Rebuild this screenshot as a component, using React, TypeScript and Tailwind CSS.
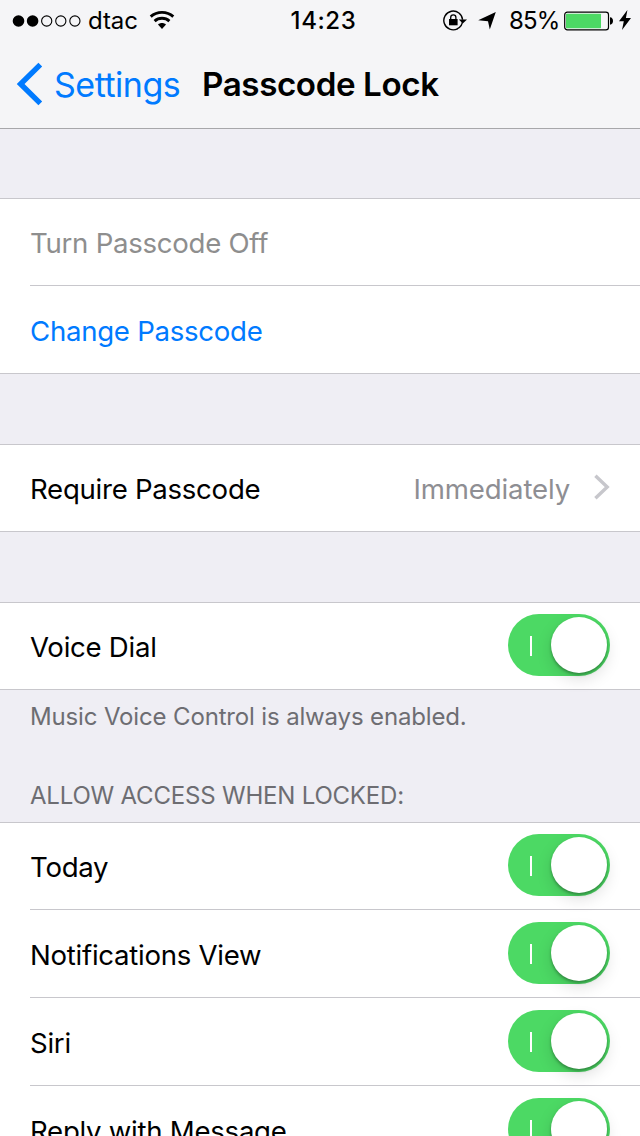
import React, { useState } from 'react';
import clsx from 'clsx';

const signal = [true, true, false, false, false];

const accessOptions = ['Today', 'Notifications View', 'Siri', 'Reply with Message'];

const StatusBar: React.FC = () => (
  <div className="relative flex h-10 items-center pl-3 text-2xl leading-10 text-black">
    <svg width="70" height="14" viewBox="0 0 70 14" className="mt-[1px] shrink-0">
      {signal.map((on, i) => (
        <circle
          key={i}
          cx={6.5 + i * 14.1}
          cy="7"
          r={on ? 5.8 : 5.1}
          fill={on ? '#000' : 'none'}
          stroke={on ? 'none' : '#000'}
          strokeWidth="1.1"
        />
      ))}
    </svg>
    <span className="ml-[6px] mt-[2px] w-[62px] tracking-[-0.1px]">dtac</span>
    <svg width="26" height="20" viewBox="0 0 26 20" fill="none" stroke="#000" strokeWidth="2.9" className="-ml-px shrink-0">
      <path d="M1.7 6.6C8 .9 18 .9 24.3 6.6" />
      <path d="M5.6 11.1C9.7 7.3 16.3 7.3 20.4 11.1" />
      <path d="M9 14.6C11.2 12.6 14.8 12.6 17 14.6L13 19Z" fill="#000" stroke="none" />
    </svg>

    <div className="absolute left-0 top-px w-full pl-[7px] text-center font-medium tracking-[0.6px]">14:23</div>

    <div className="ml-auto flex items-center pr-[9px]">
      <svg width="24" height="21" viewBox="0 0 24 21" className="mr-[11px]">
        <path d="M14.5 18.8A9.4 9.4 0 1 1 19.6 9.8" fill="none" stroke="#000" strokeWidth="1.4" />
        <path d="M15.8 9.5H24L19.8 13.6Z" />
        <path d="M19.6 10.5A9.4 9.4 0 0 1 14 18.9" fill="none" stroke="#000" strokeWidth="1.4" />
        <rect x="6" y="9" width="8.6" height="6.3" />
        <path d="M7.7 9.5V7.5A2.6 2.6 0 0 1 12.9 7.5V9.5" fill="none" stroke="#000" strokeWidth="1.3" />
      </svg>
      <svg width="19" height="18" viewBox="0 0 19 18" className="mr-3 mt-[1px]">
        <path d="M17.8 0L11.8 17.6L10 9.2L.2 8.3Z" />
      </svg>
      <span className="mt-[2px] w-[55px] tracking-[-0.9px]">85%</span>
      <svg width="50" height="20" viewBox="0 0 50 20" className="mt-[1px]">
        <rect x=".7" y="1.2" width="43.8" height="17.6" rx="2.6" fill="none" stroke="#000" strokeWidth="1.2" />
        <rect x="2" y="2.7" width="35" height="14.6" rx=".8" fill="#4cd964" />
        <path d="M46 6.3C50 6.3 50 13.7 46 13.7Z" />
      </svg>
      <svg width="12" height="20" viewBox="0 0 12 20" className="ml-[5px]">
        <path d="M8.4 0L0 11.2H4.8L3 20L12 8H6.9Z" />
      </svg>
    </div>
  </div>
);

const NavBar: React.FC = () => (
  <div className="flex h-[88px] items-center pl-4 text-[34px] leading-[40px]">
    <svg width="28" height="44" viewBox="0 0 28 44" fill="none" stroke="#007aff" strokeWidth="5.4">
      <path d="M24.3 2.6L4.6 22L24.3 41.4" />
    </svg>
    <span className="ml-[10px] mt-px w-[148px] shrink-0 whitespace-nowrap tracking-[-0.5px] text-[#007aff]">Settings</span>
    <h1 className="whitespace-nowrap text-[33.2px] font-semibold tracking-[-0.42px] text-black">Passcode Lock</h1>
  </div>
);

const Switch: React.FC = () => {
  const [on, setOn] = useState(true);

  return (
    <button
      role="switch"
      aria-checked={on}
      onClick={() => setOn(!on)}
      className={clsx(
        'flex h-[62px] w-[102px] shrink-0 items-center rounded-full px-[3px]',
        on ? 'justify-end bg-[#4cd964]' : 'justify-start bg-[#e5e5ea]'
      )}
    >
      {on && <span className="mr-[19px] mt-[2px] h-5 w-[2px] bg-white" />}
      <span className="h-14 w-14 rounded-full bg-white shadow-[0_6px_16px_rgba(0,0,0,0.13),0_2px_3px_rgba(0,0,0,0.3)]" />
    </button>
  );
};

type RowProps = {
  label: string;
  labelClass?: string;
  first?: boolean;
  last?: boolean;
  children?: React.ReactNode;
};

const Row: React.FC<RowProps> = ({ label, labelClass = 'text-black', first, last, children }) => (
  <div
    className={clsx(
      'h-[88px] border-t bg-white pl-[30px]',
      first ? 'border-t-[#c8c7cc]' : 'border-t-transparent',
      last && 'border-b border-b-[#c8c7cc]'
    )}
  >
    <div
      className={clsx(
        'flex h-full items-start justify-between pr-[30px] pt-[11px]',
        !last && 'border-b border-b-[#c8c7cc]'
      )}
    >
      <span
        className={clsx(
          'mt-[13px] whitespace-nowrap text-[27.6px] leading-[40px] tracking-[-0.27px]',
          labelClass
        )}
      >
        {label}
      </span>
      {children}
    </div>
  </div>
);

const App: React.FC = () => (
  <div className="h-[1136px] w-[640px] overflow-hidden bg-[#efeef4] font-['Inter',sans-serif]">
    <header className="h-[129px] border-b border-[#a7a7aa] bg-[#f5f5f7]">
      <StatusBar />
      <NavBar />
    </header>

    <section className="mt-[69px]">
      <Row label="Turn Passcode Off" labelClass="text-[#8e8e8e]" first />
      <Row label="Change Passcode" labelClass="text-[#007aff]" last />
    </section>

    <section className="mt-[70px]">
      <Row label="Require Passcode" first last>
        <div className="mt-[13px] flex items-center text-[27.6px] leading-[40px] tracking-[-0.15px] text-[#8e8e93]">
          Immediately
          <svg width="18" height="28" viewBox="0 0 18 28" fill="none" stroke="#c7c7cc" strokeWidth="3.4" className="-mt-[4px] ml-[22px]">
            <path d="M3.4 2.8L15.2 14L3.4 25.2" />
          </svg>
        </div>
      </Row>
    </section>

    <section className="mt-[70px]">
      <Row label="Voice Dial" first last>
        <Switch />
      </Row>
      <p className="h-[79px] pl-[30px] pt-[11px] text-2xl leading-8 tracking-[-0.15px] text-[#6d6d72]">
        Music Voice Control is always enabled.
      </p>
    </section>

    <section>
      <h2 className="h-[53px] pl-[30px] pt-[11px] text-2xl leading-8 tracking-[-0.2px] text-[#6d6d72]">
        ALLOW ACCESS WHEN LOCKED:
      </h2>
      {accessOptions.map((option, i) => (
        <Row key={option} label={option} first={i === 0}>
          <Switch />
        </Row>
      ))}
    </section>
  </div>
);

export default App;
